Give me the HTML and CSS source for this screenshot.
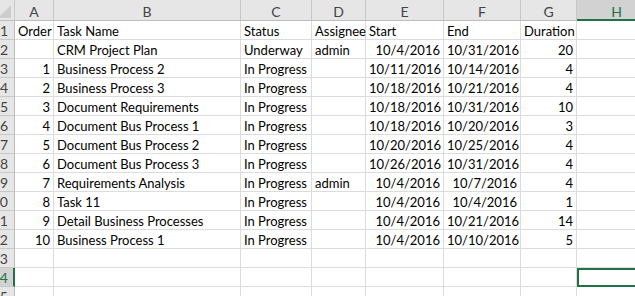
FILE: index.html
```html
<!DOCTYPE html>
<html lang="en">
<head>
    <meta charset="UTF-8">
    <title>CRM Project Plan</title>
    <link rel="stylesheet" href="styles.css">
</head>
<body>
    <div class="sheet">
        <!-- column headers -->
        <div class="hdr corner">
            <svg width="14" height="16" viewBox="0 0 14 16"><polygon points="0,16 13,16 13,3" fill="#cdcdcd"/></svg>
        </div>
        <div class="hdr">A</div>
        <div class="hdr">B</div>
        <div class="hdr">C</div>
        <div class="hdr">D</div>
        <div class="hdr">E</div>
        <div class="hdr">F</div>
        <div class="hdr">G</div>
        <div class="hdr active-col">H</div>

        <div class="rh">1</div>
        <div class="c">Order</div><div class="c">Task Name</div><div class="c">Status</div><div class="c">Assignee</div><div class="c">Start</div><div class="c">End</div><div class="c">Duration</div><div class="c"></div>

        <div class="rh">2</div>
        <div class="c"></div><div class="c">CRM Project Plan</div><div class="c">Underway</div><div class="c">admin</div><div class="c num">10/4/2016</div><div class="c num">10/31/2016</div><div class="c num">20</div><div class="c"></div>

        <div class="rh">3</div>
        <div class="c num">1</div><div class="c">Business Process 2</div><div class="c">In Progress</div><div class="c"></div><div class="c num">10/11/2016</div><div class="c num">10/14/2016</div><div class="c num">4</div><div class="c"></div>

        <div class="rh">4</div>
        <div class="c num">2</div><div class="c">Business Process 3</div><div class="c">In Progress</div><div class="c"></div><div class="c num">10/18/2016</div><div class="c num">10/21/2016</div><div class="c num">4</div><div class="c"></div>

        <div class="rh">5</div>
        <div class="c num">3</div><div class="c">Document Requirements</div><div class="c">In Progress</div><div class="c"></div><div class="c num">10/18/2016</div><div class="c num">10/31/2016</div><div class="c num">10</div><div class="c"></div>

        <div class="rh">6</div>
        <div class="c num">4</div><div class="c">Document Bus Process 1</div><div class="c">In Progress</div><div class="c"></div><div class="c num">10/18/2016</div><div class="c num">10/20/2016</div><div class="c num">3</div><div class="c"></div>

        <div class="rh">7</div>
        <div class="c num">5</div><div class="c">Document Bus Process 2</div><div class="c">In Progress</div><div class="c"></div><div class="c num">10/20/2016</div><div class="c num">10/25/2016</div><div class="c num">4</div><div class="c"></div>

        <div class="rh">8</div>
        <div class="c num">6</div><div class="c">Document Bus Process 3</div><div class="c">In Progress</div><div class="c"></div><div class="c num">10/26/2016</div><div class="c num">10/31/2016</div><div class="c num">4</div><div class="c"></div>

        <div class="rh">9</div>
        <div class="c num">7</div><div class="c">Requirements Analysis</div><div class="c">In Progress</div><div class="c">admin</div><div class="c num">10/4/2016</div><div class="c num">10/7/2016</div><div class="c num">4</div><div class="c"></div>

        <div class="rh">10</div>
        <div class="c num">8</div><div class="c">Task 11</div><div class="c">In Progress</div><div class="c"></div><div class="c num">10/4/2016</div><div class="c num">10/4/2016</div><div class="c num">1</div><div class="c"></div>

        <div class="rh">11</div>
        <div class="c num">9</div><div class="c">Detail Business Processes</div><div class="c">In Progress</div><div class="c"></div><div class="c num">10/4/2016</div><div class="c num">10/21/2016</div><div class="c num">14</div><div class="c"></div>

        <div class="rh">12</div>
        <div class="c num">10</div><div class="c">Business Process 1</div><div class="c">In Progress</div><div class="c"></div><div class="c num">10/4/2016</div><div class="c num">10/10/2016</div><div class="c num">5</div><div class="c"></div>

        <div class="rh">13</div>
        <div class="c"></div><div class="c"></div><div class="c"></div><div class="c"></div><div class="c"></div><div class="c"></div><div class="c"></div><div class="c"></div>

        <div class="rh active-row">14</div>
        <div class="c"></div><div class="c"></div><div class="c"></div><div class="c"></div><div class="c"></div><div class="c"></div><div class="c"></div><div class="c selected"></div>

        <div class="rh">15</div>
        <div class="c"></div><div class="c"></div><div class="c"></div><div class="c"></div><div class="c"></div><div class="c"></div><div class="c"></div><div class="c"></div>
    </div>
</body>
</html>
```

FILE: styles.css
```css
body {
    margin: 0;
    overflow: hidden;
    background: #fff;
    font-family: Lato, "Liberation Sans", sans-serif;
    font-size: 13px;
    color: #000;
}
.sheet {
    display: grid;
    grid-template-columns: 25px 39px 187px 71px 54px 78px 77px 56px 80px;
    grid-template-rows: 21px;
    grid-auto-rows: 19px;
    margin-left: -10px;
    width: 667px;
}
.sheet > div {
    box-sizing: border-box;
    white-space: nowrap;
}
.hdr {
    background: #e6e6e6;
    border-right: 1px solid #c8c8c8;
    border-bottom: 1px solid #bdbdbd;
    color: #444;
    font-size: 14px;
    text-align: center;
    line-height: 21px;
    padding-top: 1px;
}
.corner {
    display: flex;
    justify-content: flex-end;
    align-items: flex-end;
    padding: 0 2px 2px 0;
}
.corner svg {
    display: block;
}
.active-col {
    background: #d2d2d2;
    color: #217346;
    border-bottom: 2px solid #217346;
}
.rh {
    background: #e6e6e6;
    border-right: 1px solid #bdbdbd;
    border-bottom: 1px solid #c8c8c8;
    color: #444;
    font-size: 14px;
    text-align: right;
    padding-right: 6px;
    line-height: 19px;
    overflow: hidden;
}
.active-row {
    background: #d2d2d2;
    color: #217346;
    border-right: 2px solid #217346;
    padding-right: 5px;
}
.c {
    border-right: 1px solid #dadcdd;
    border-bottom: 1px solid #dadcdd;
    padding: 1px 3px 0 3px;
    line-height: 18px;
}
.num {
    text-align: right;
}
.selected {
    outline: 2px solid #217346;
    outline-offset: -2px;
}
```
